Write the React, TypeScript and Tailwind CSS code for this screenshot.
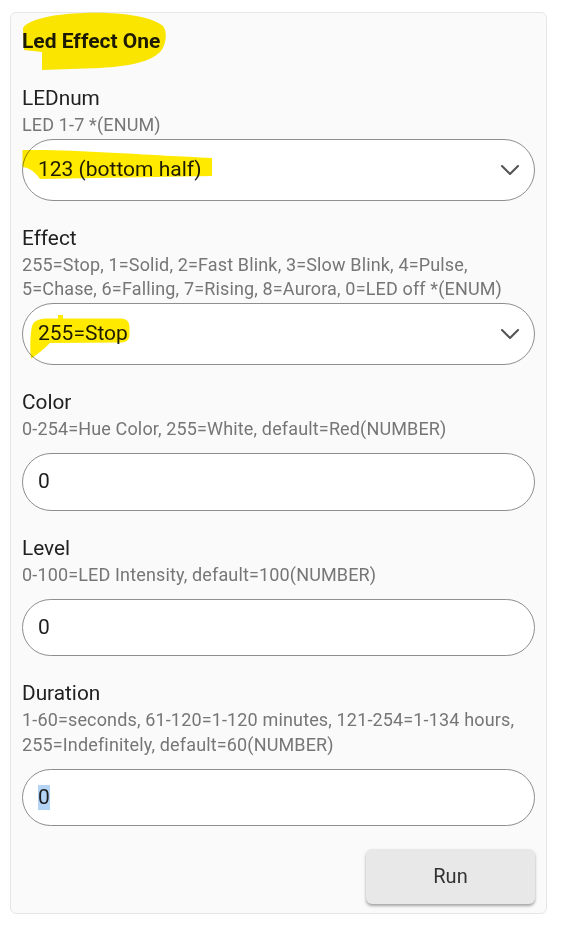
import React from "react";

function Chevron() {
  return (
    <svg width="20" height="12" viewBox="0 0 20 12" className="shrink-0">
      <polyline points="2,2 10,10 18,2" fill="none" stroke="#555555" strokeWidth="2.1" strokeLinecap="round" strokeLinejoin="round" />
    </svg>
  );
}

function Label({ children }: { children: React.ReactNode }) {
  return <div className="text-[20.8px] leading-[28px] text-[#212121]">{children}</div>;
}

function Helper({ children }: { children: React.ReactNode }) {
  return (
    <div className="mt-[1px] text-[18px] tracking-[0.15px] leading-[24.5px] text-[#767676] whitespace-nowrap">
      {children}
    </div>
  );
}

function SelectBox({ value }: { value: string }) {
  return (
    <div className="mt-[1.5px] h-[62px] w-full rounded-full border border-[#8e8e8e] bg-white flex items-center justify-between pl-[15px] pr-[14px]">
      <span className="text-[21px] text-[#1e1e1e]">{value}</span>
      <Chevron />
    </div>
  );
}

function InputBox({ children }: { children: React.ReactNode }) {
  return (
    <div className="mt-[11.5px] h-[57.5px] w-full rounded-full border border-[#8e8e8e] bg-white flex items-center pl-[15px]">
      <span className="text-[21px] text-[#1e1e1e]">{children}</span>
    </div>
  );
}

export default function App() {
  return (
    <div className="relative w-[570px] h-[928px] bg-white font-['Roboto',sans-serif]">
      <div className="pt-[12px] pl-[10px]">
        <div className="w-[537px] rounded-[6px] border border-[#e6e6e6] bg-[#fafafa] px-[11px] pt-[14px] pb-[9px] flex flex-col">
          <div className="text-[21px] font-bold leading-[28px] text-[#1c1c1c]">Led Effect One</div>

          <div className="mt-[28.5px]">
            <Label>LEDnum</Label>
            <Helper>LED 1-7 *(ENUM)</Helper>
            <SelectBox value="123 (bottom half)" />
          </div>

          <div className="mt-[23px]">
            <Label>Effect</Label>
            <Helper>
              255=Stop, 1=Solid, 2=Fast Blink, 3=Slow Blink, 4=Pulse,
              <br />
              5=Chase, 6=Falling, 7=Rising, 8=Aurora, 0=LED off *(ENUM)
            </Helper>
            <SelectBox value="255=Stop" />
          </div>

          <div className="mt-[23px]">
            <Label>Color</Label>
            <Helper>0-254=Hue Color, 255=White, default=Red(NUMBER)</Helper>
            <InputBox>0</InputBox>
          </div>

          <div className="mt-[23px]">
            <Label>Level</Label>
            <Helper>0-100=LED Intensity, default=100(NUMBER)</Helper>
            <InputBox>0</InputBox>
          </div>

          <div className="mt-[23px]">
            <Label>Duration</Label>
            <Helper>
              1-60=seconds, 61-120=1-120 minutes, 121-254=1-134 hours,
              <br />
              255=Indefinitely, default=60(NUMBER)
            </Helper>
            <InputBox>
              <span className="bg-[#b4d3f5] inline-block leading-[25px]">0</span>
            </InputBox>
          </div>

          <div className="mt-[22.5px] flex justify-end">
            <button className="h-[55px] w-[169px] rounded-[6px] bg-[#e8e8e8] text-[20px] text-[#333333] shadow-[0_2px_3px_rgba(0,0,0,0.35)]">
              Run
            </button>
          </div>
        </div>
      </div>

      <svg
        className="absolute left-0 top-0 pointer-events-none mix-blend-multiply"
        width="570"
        height="928"
        viewBox="0 0 570 928"
      >
        <path
          fill="#ffea00"
          d="M23,28 C28,20 50,14 85,13 C120,12 150,16 163,26 C168,32 166,46 160,52 C150,62 130,66 100,68 L42,70 L42,52 L24,50 Z"
        />
        <path
          fill="#ffea00"
          d="M22.5,150 L45,150 C90,151 150,155 212,158 L212,176 L40,179 C35,172 30,168 22.5,167 Z"
        />
        <path
          fill="#ffea00"
          d="M32,326 C34,320 40,318.5 50,318.5 L58,318.5 L58,315 L63,315 L63,318.5 L121,318.5 C127,318.5 129.5,322 129.5,328 L129.5,335 C129.5,340 126,342.5 120,342.5 L50,343 C45,348 38,354 31,358.5 C30,350 30,335 32,326 Z"
        />
      </svg>
    </div>
  );
}
